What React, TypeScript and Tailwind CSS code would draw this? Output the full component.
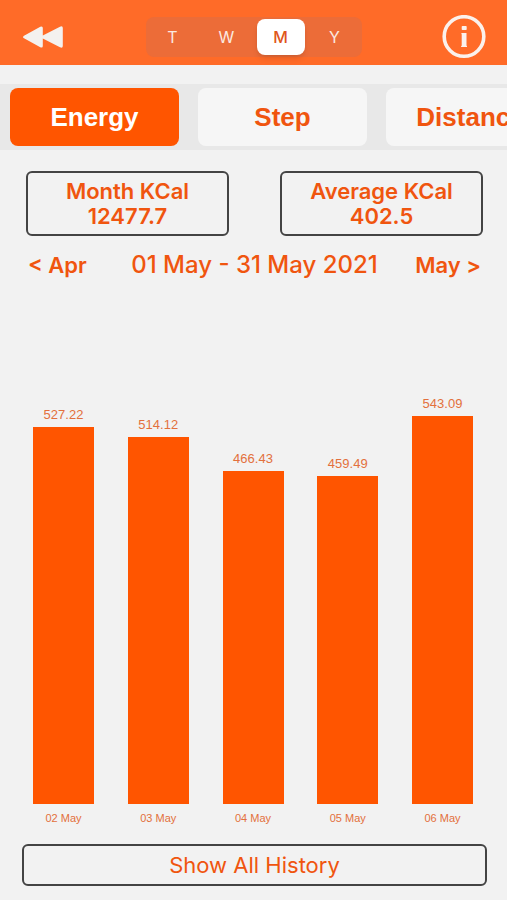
import { useState } from 'react';
import clsx from 'clsx';

const PERIODS = [
  { id: 'T', label: 'Today' },
  { id: 'W', label: 'Week' },
  { id: 'M', label: 'Month' },
  { id: 'Y', label: 'Year' },
];

const METRICS = ['Energy', 'Step', 'Distance'];

const CHART_MAX = 735;

const DAYS = [
  { date: '02 May', kcal: 527.22 },
  { date: '03 May', kcal: 514.12 },
  { date: '04 May', kcal: 466.43 },
  { date: '05 May', kcal: 459.49 },
  { date: '06 May', kcal: 543.09 },
];

export default function App() {
  const [period, setPeriod] = useState('M');
  const [metric, setMetric] = useState('Energy');

  return (
    <div className="flex min-h-screen flex-col bg-[#f2f2f2] font-['Inter',sans-serif] text-[#f0550f]">
      <Header period={period} onPeriodChange={setPeriod} />
      <MetricTabs metric={metric} onMetricChange={setMetric} />

      <main className="flex grow flex-col">
        <div className="mt-[21px] flex justify-between pr-6 pl-[26px]">
          <SummaryCard title="Month KCal" value="12477.7" />
          <SummaryCard title="Average KCal" value="402.5" />
        </div>

        <div className="mt-[15px] grid grid-cols-[1fr_auto_1fr] items-center pr-[26px] pl-7">
          <button className="justify-self-start text-[22px] leading-7 font-semibold">&lt; Apr</button>
          <h1 className="text-2xl leading-7 font-medium">01 May - 31 May 2021</h1>
          <button className="justify-self-end text-[22px] leading-7 font-semibold">May &gt;</button>
        </div>

        <EnergyChart />

        <div className="mt-[18px] mb-[14px] flex pr-5 pl-[22px]">
          <button className="h-[42px] grow rounded-md border-2 border-[#444] text-[22px]">
            Show All History
          </button>
        </div>
      </main>
    </div>
  );
}

interface HeaderProps {
  period: string;
  onPeriodChange: (period: string) => void;
}

function Header({ period, onPeriodChange }: HeaderProps) {
  return (
    <header className="flex h-[65px] items-center justify-between bg-[#ff6b28] px-[21px] pt-2">
      <button aria-label="Back" className="flex size-11 items-center justify-center">
        <RewindIcon />
      </button>

      <div className="grid h-10 w-54 grid-cols-4 rounded-lg bg-[#ec6c38] py-[2px]">
        {PERIODS.map(({ id, label }) => (
          <button
            key={id}
            aria-label={label}
            aria-pressed={period === id}
            onClick={() => onPeriodChange(id)}
            className={clsx(
              'mx-[3px] rounded-lg text-base',
              period === id ? 'bg-white font-medium text-[#e0561c] shadow-md' : 'text-[#fbe9e1]'
            )}
          >
            {id}
          </button>
        ))}
      </div>

      <button aria-label="Info" className="flex size-11 items-center justify-center">
        <InfoIcon />
      </button>
    </header>
  );
}

interface MetricTabsProps {
  metric: string;
  onMetricChange: (metric: string) => void;
}

function MetricTabs({ metric, onMetricChange }: MetricTabsProps) {
  return (
    <nav className="mt-[19px] flex gap-[19px] overflow-x-auto bg-[#e8e8e8] py-1 pl-[10px] [scrollbar-width:none]">
      {METRICS.map((name) => (
        <button
          key={name}
          aria-pressed={metric === name}
          onClick={() => onMetricChange(name)}
          className={clsx(
            "h-[58px] w-[169px] shrink-0 rounded-lg font-['Liberation_Sans',sans-serif] text-[26px] font-bold",
            metric === name ? 'bg-[#ff5500] text-white' : 'bg-[#f6f6f6]'
          )}
        >
          {name}
        </button>
      ))}
    </nav>
  );
}

function SummaryCard({ title, value }: { title: string; value: string }) {
  return (
    <section className="w-[203px] rounded-md border-2 border-[#444] pt-[6px] pb-[5px] text-center text-[22px] leading-[25px] font-semibold">
      <h2>{title}</h2>
      <p>{value}</p>
    </section>
  );
}

function EnergyChart() {
  return (
    <div className="flex min-h-80 grow justify-between pr-[34px] pl-[33px]">
      {DAYS.map((day) => (
        <div key={day.date} className="flex w-[61px] flex-col text-center font-['Liberation_Sans',sans-serif]">
          <div
            className="flex basis-0 items-end justify-center text-[13px] leading-6 text-[#e3703c]"
            style={{ flexGrow: CHART_MAX - day.kcal }}
          >
            {day.kcal}
          </div>
          <div className="basis-0 bg-[#ff5500]" style={{ flexGrow: day.kcal }} />
          <div className="pt-[6px] text-[11px] leading-4 text-[#e3703c]">{day.date}</div>
        </div>
      ))}
    </div>
  );
}

function RewindIcon() {
  return (
    <svg viewBox="0 0 40 22" className="h-[22px] w-10 fill-[#f4f1ef]">
      <path d="M1 9.7 17.3.7Q19.8-.3 19.8 2v7.6L37 .7Q39.8-.4 39.8 2v18q0 2.4-2.8 1.3L19.8 12.4V20q0 2.3-2.5 1.3L1 12.3Q-1 11 1 9.7Z" />
    </svg>
  );
}

function InfoIcon() {
  return (
    <svg viewBox="0 0 44 44" className="size-11 fill-[#fbf1ec]">
      <circle cx="22" cy="21.5" r="19.8" fill="none" stroke="#fbf1ec" strokeWidth="3.6" />
      <rect x="19.7" y="11" width="5" height="4" rx="0.8" />
      <path d="M19.4 18h5.1v12.8l.5.3v.9h-5.9v-.9l.6-.3V19.2l-.3-.2Z" />
    </svg>
  );
}
